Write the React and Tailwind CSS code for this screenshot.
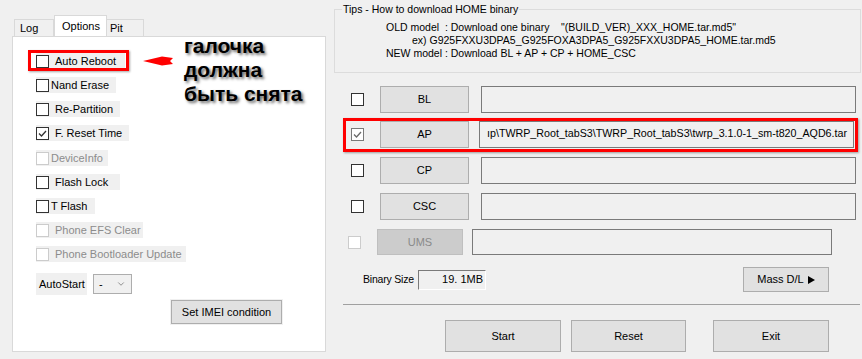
import { ChevronDown } from 'lucide-react'

const OPTIONS = [
    { label: 'Auto Reboot', w: 'w-[89px]' },
    { label: 'Nand Erase', w: 'w-[80px]', tight: true },
    { label: 'Re-Partition', w: 'w-[84px]' },
    { label: 'F. Reset Time', w: 'w-[93px]', checked: true },
    { label: 'DeviceInfo', w: 'w-[72px]', disabled: true, tight: true, mt: 'mt-[1px]' },
    { label: 'Flash Lock', w: 'w-[84px]' },
    { label: 'T Flash', w: 'w-[59px]', tight: true },
    { label: 'Phone EFS Clear', w: 'w-[107px]', disabled: true },
    { label: 'Phone Bootloader Update', w: 'w-[150px]', disabled: true },
]

function Check({ checked, disabled, gray }) {
    return (
        <div className={"w-[13px] h-[13px] border bg-white flex items-center justify-center shrink-0 " + (disabled ? 'border-[#cccccc]' : gray ? 'border-[#7a7a7a]' : 'border-[#333333]')}>
            {checked ? (
                <svg width="11" height="11" viewBox="0 0 11 11">
                    <polyline points="2,5.5 4.5,8 9,3" fill="none" stroke={gray ? '#6b6b6b' : '#333'} strokeWidth="1.3" />
                </svg>
            ) : null}
        </div>
    )
}

function WinButton({ children, className = '' }) {
    return (
        <div className={"flex items-center justify-center border border-[#adadad] bg-[#e1e1e1] text-black " + className}>
            {children}
        </div>
    )
}

function FileRow({ name, mt }) {
    return (
        <div className={"flex items-center h-[27px] " + mt}>
            <div className="ml-[17px]"><Check /></div>
            <WinButton className="ml-[16px] w-[89px] h-[27px]">{name}</WinButton>
            <div className="ml-[12px] w-[375px] h-[27px] border border-[#7a7a7a] bg-[#f0f0f0]" />
        </div>
    )
}

export default function App() {
    return (
        <div className="relative w-[862px] h-[359px] overflow-hidden bg-[#f0f0f0] flex text-[11px] leading-[13px] text-black whitespace-nowrap" style={{ fontFamily: '"Liberation Sans", Arial, sans-serif' }}>
            {/* left: tabs */}
            <div className="w-[334px] shrink-0 pl-[12px] pt-[15px] flex flex-col">
                <div className="flex items-end h-[21px] pl-[2px]">
                    <div className="w-[40px] h-[17px] border border-b-0 border-[#d9d9d9] pl-[5px] pt-[2px]">Log</div>
                    <div className="w-[53px] h-[21px] border border-b-0 border-[#d9d9d9] bg-white pl-[7px] pt-[4px]">Options</div>
                    <div className="w-[37px] h-[17px] border border-b-0 border-l-0 border-[#d9d9d9] pl-[3px] pt-[2px]">Pit</div>
                </div>
                <div className="w-[314px] h-[316px] bg-white border border-[#d9d9d9] pl-[23px] pt-[12px] flex flex-col">
                    {OPTIONS.map(o => (
                        <div key={o.label} className={"h-[24px] flex items-center " + (o.mt ?? '')}>
                            <div className={"h-[16px] bg-[#f0f0f0] flex items-center " + o.w}>
                                <Check checked={o.checked} disabled={o.disabled} />
                                <span className={(o.tight ? 'ml-[2px] ' : 'ml-[6px] ') + (o.disabled ? 'text-[#8c8c8c]' : '')}>{o.label}</span>
                            </div>
                        </div>
                    ))}
                    <div className="mt-[7px] h-[22px] flex items-center">
                        <div className="h-[22px] w-[51px] bg-[#f0f0f0] flex items-center pl-[3px]">AutoStart</div>
                        <div className="ml-[6px] w-[39px] h-[20px] border border-[#adadad] bg-[#f0f0f0] flex items-center justify-between pl-[5px] pr-[5px]">
                            <span>-</span>
                            <ChevronDown size={10} strokeWidth={1.5} color="#555" />
                        </div>
                    </div>
                    <div className="mt-[4px] ml-[134px] p-[1px] bg-[#f0f0f0] w-[113px]">
                        <WinButton className="w-[111px] h-[24px]">Set IMEI condition</WinButton>
                    </div>
                </div>
            </div>

            {/* right */}
            <div className="w-[528px] shrink-0 flex flex-col">
                <div className="relative mt-[9px] h-[64px] w-[527px] border border-[#dcdcdc] pt-[11px] pl-[51px] text-[10.5px]">
                    <div className="absolute -top-[7px] left-[7px] px-[1px] bg-[#f0f0f0]">Tips - How to download HOME binary</div>
                    <div className="whitespace-pre">{'OLD model  : Download one binary    "(BUILD_VER)_XXX_HOME.tar.md5"'}</div>
                    <div className="whitespace-pre pl-[26px]">ex) G925FXXU3DPA5_G925FOXA3DPA5_G925FXXU3DPA5_HOME.tar.md5</div>
                    <div className="whitespace-pre">NEW model : Download BL + AP + CP + HOME_CSC</div>
                </div>

                <FileRow name="BL" mt="mt-[13px]" />
                <div className="relative mt-[8px]">
                    <div className="flex items-center h-[27px]">
                        <div className="ml-[17px]"><Check checked gray /></div>
                        <WinButton className="ml-[16px] w-[89px] h-[27px]">AP</WinButton>
                        <div className="ml-[10px] w-[375px] h-[27px] border border-[#7a7a7a] bg-[#f0f0f0] overflow-hidden flex justify-end pr-[6px] pt-[5px] text-[10.7px]">
                            ıp\TWRP_Root_tabS3\TWRP_Root_tabS3\twrp_3.1.0-1_sm-t820_AQD6.tar
                        </div>
                    </div>
                    <div className="absolute left-[9px] top-[-3px] w-[515px] h-[34px] border-[3px] border-[#ff0000] shadow-[1px_1px_2px_rgba(0,0,0,0.35)]" />
                </div>
                <FileRow name="CP" mt="mt-[9px]" />
                <FileRow name="CSC" mt="mt-[9px]" />

                <div className="flex items-center h-[26px] mt-[9px]">
                    <div className="ml-[14px]"><Check disabled /></div>
                    <div className="ml-[16px] w-[86px] h-[26px] border border-[#bfbfbf] bg-[#cccccc] text-[#8a8a8a] flex items-center justify-center">UMS</div>
                    <div className="ml-[9px] w-[360px] h-[26px] border border-[#7a7a7a] bg-[#f0f0f0]" />
                </div>

                <div className="flex items-center h-[25px] mt-[12px]">
                    <div className="ml-[29px] w-[55px] text-[10.5px] tracking-[-0.2px]">Binary Size</div>
                    <div className="w-[68px] h-[20px] border-t border-l border-[#7a7a7a] border-r border-b border-r-white border-b-white flex items-center justify-end pr-[2px]">19. 1MB</div>
                    <WinButton className="ml-auto mr-[33px] w-[86px] h-[25px]">
                        <span>Mass D/L</span>
                        <svg className="ml-[4px]" width="7" height="8" viewBox="0 0 7 8"><polygon points="0,0 7,4 0,8" fill="#000" /></svg>
                    </WinButton>
                </div>

                <div className="mt-[12px] ml-[9px] w-[517px] h-[1px] bg-[#a0a0a0]" />

                <div className="flex mt-[15px]">
                    <WinButton className="ml-[111px] w-[116px] h-[32px]">Start</WinButton>
                    <WinButton className="ml-[10px] w-[115px] h-[32px]">Reset</WinButton>
                    <WinButton className="ml-[27px] w-[116px] h-[32px]">Exit</WinButton>
                </div>
            </div>

            {/* annotation overlay */}
            <div className="absolute left-[28px] top-[50px] w-[101px] h-[21px] border-[3px] border-[#ff0000] shadow-[1px_1px_2px_rgba(0,0,0,0.35)]" />
            <svg className="absolute left-[143px] top-[56px]" width="31" height="10" viewBox="0 0 31 10">
                <polygon points="0,5 19,0.5 30,2 27,5 30,8 19,9.5" fill="#ff0000" />
            </svg>
            <div className="absolute left-[184px] top-[34px] text-[21px] leading-[24px] font-bold [text-shadow:2px_2px_3px_rgba(0,0,0,0.6)]">
                <div>галочка</div>
                <div>должна</div>
                <div>быть снята</div>
            </div>
        </div>
    )
}
